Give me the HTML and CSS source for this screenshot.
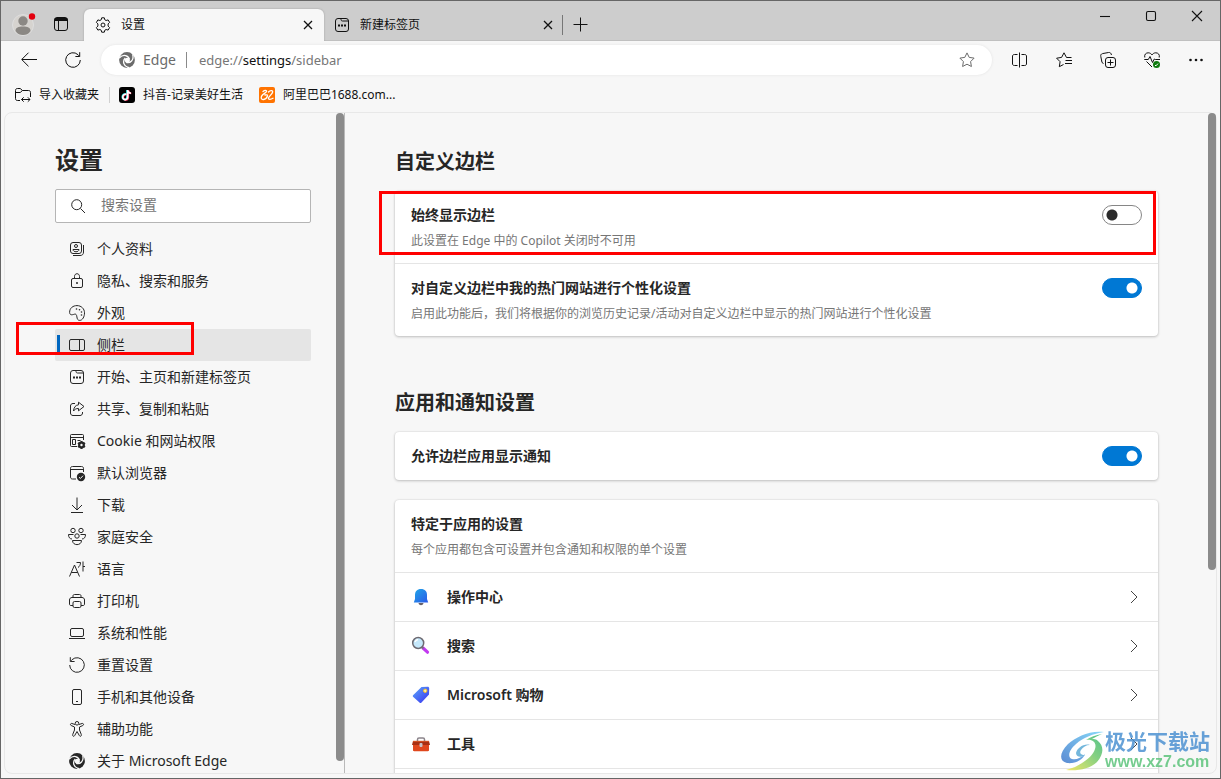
FILE: index.html
```html
<!DOCTYPE html>
<html lang="zh-CN">
<head>
<meta charset="utf-8">
<title>设置</title>
<link rel="stylesheet" href="styles.css">
</head>
<body>
<svg class="defs" aria-hidden="true">
  <defs>
    <mask id="swirl" maskUnits="userSpaceOnUse" x="0" y="0" width="16" height="16">
      <circle cx="8" cy="8" r="7.900" fill="#fff"/>
      <circle cx="8.300" cy="8.200" r="2.500" fill="#000"/>
      <g fill="none" stroke="#000" stroke-width="1.300">
        <path d="M10.500 7.500C9.500 3.500 4.500 1.500.2 6"/>
        <path d="M10.500 7.500C9.500 3.500 4.500 1.500.2 6" transform="rotate(120 8 8)"/>
        <path d="M10.500 7.500C9.500 3.500 4.500 1.500.2 6" transform="rotate(240 8 8)"/>
      </g>
    </mask>
    <symbol id="edge" viewBox="0 0 16 16"><rect width="16" height="16" fill="currentColor" mask="url(#swirl)"/></symbol>
    <symbol id="newtab" viewBox="0 0 16 16">
      <rect x="1.500" y="1.500" width="13" height="13" rx="2.500"/><path d="M7 1.500v1c0 .8.500 1.500 1.500 1.500h6"/>
      <path stroke-width="1.800" d="M4 8.500h2M7 8.500h2M10 8.500h2"/>
    </symbol>
    <symbol id="x" viewBox="0 0 16 16"><path d="M4 4l8 8M12 4l-8 8"/></symbol>
    <symbol id="go" viewBox="0 0 16 16"><path d="M5 2l6 6-6 6"/></symbol>
  </defs>
</svg>

<div class="window">
  <header class="titlebar">
    <button class="profile" aria-label="个人资料">
      <svg viewBox="0 0 24 24"><circle cx="11" cy="13" r="10.500" fill="#d6d3cf" stroke="#dedede"/><circle cx="11" cy="9" r="4.700" fill="#8b8884"/><path d="M3.500 19c0-3.500 3-4.500 7.500-4.500s7.500 1 7.500 4.500c-2 3-4.500 4-7.500 4s-5.500-1-7.500-4z" fill="#8b8884"/><circle cx="20" cy="4.500" r="3.200" fill="#e3000f"/></svg>
    </button>
    <button class="workspace" aria-label="标签页操作">
      <svg class="icon" viewBox="0 0 16 16"><rect x="1.500" y="1.500" width="13" height="13" rx="2.500"/><path fill="currentColor" d="M2 2.500h12v2H2z"/><path d="M5.500 5v9"/></svg>
    </button>
    <div class="tab tab-active">
      <svg class="icon" viewBox="0 0 16 16"><path d="M6.700.8h2.600l.5 2 1.300.7 2-.6 1.500 2.500-1.500 1.500v2.200l1.500 1.500-1.500 2.500-2-.6-1.300.7-.5 2H6.700l-.5-2-1.300-.7-2 .6-1.500-2.500 1.500-1.500V6.900L1.400 5.400l1.500-2.500 2 .6 1.300-.7z"/><circle cx="8" cy="8" r="2"/></svg>
      <span class="tab-title">设置</span>
      <button class="tab-close" aria-label="关闭"><svg class="icon"><use href="#x"/></svg></button>
    </div>
    <div class="tab">
      <svg class="icon"><use href="#newtab"/></svg>
      <span class="tab-title">新建标签页</span>
      <button class="tab-close" aria-label="关闭"><svg class="icon"><use href="#x"/></svg></button>
    </div>
    <button class="tab-add" aria-label="新建"><svg class="icon" viewBox="0 0 16 16"><path d="M7.500.5v14M.5 7.500h14"/></svg></button>
    <div class="controls">
      <button aria-label="最小化"><svg class="icon" viewBox="0 0 16 16"><path d="M3 8.500h10"/></svg></button>
      <button aria-label="最大化"><svg class="icon" viewBox="0 0 16 16"><rect x="3.500" y="3.500" width="9" height="9" rx="1.500"/></svg></button>
      <button aria-label="关闭窗口"><svg class="icon" viewBox="0 0 16 16"><path d="M3 3l10 10M13 3 3 13"/></svg></button>
    </div>
  </header>

  <div class="toolbar">
    <button class="tool" aria-label="返回"><svg class="icon" viewBox="0 0 16 16"><path d="M16 7.500H1M7.500.7.700 7.500l6.800 6.800"/></svg></button>
    <button class="tool tool-last" aria-label="刷新"><svg class="icon" viewBox="0 0 16 16"><path d="M15.300 8A7.300 7.300 0 1 1 13 2.700l1.500 1.500M14.700.2v4.300h-4.300"/></svg></button>
    <div class="address">
      <svg class="edge-mark"><use href="#edge"/></svg>
      <span class="brand">Edge</span>
      <span class="url">edge://<b>settings</b>/sidebar</span>
      <button class="star" aria-label="收藏"><svg class="icon" viewBox="0 0 16 16"><path d="m8 .9 2.200 4.500 4.900.7-3.500 3.500.8 4.900L8 12.200l-4.400 2.300.8-4.900L.9 6.100l4.900-.7z"/></svg></button>
    </div>
    <button class="tool" aria-label="拆分屏幕"><svg class="icon" viewBox="0 0 16 16"><path d="M7.500.5v15M5.500 2.500h-3c-1 0-2 .5-2 1.500v8c0 1 1 1.500 2 1.500h3M9.500 2.500h3c1 0 2 .5 2 1.500v8c0 1-1 1.500-2 1.500h-3"/></svg></button>
    <button class="tool" aria-label="收藏夹"><svg class="icon" viewBox="0 0 16 16"><path d="M15.500 5.500h-5L8 .8 5.600 5.400.6 6.200l3.500 3.500-.8 5 4.200-2.200M9.500 8.500h6.500M9 11.500h7"/></svg></button>
    <button class="tool" aria-label="集锦"><svg class="icon" viewBox="0 0 16 16"><rect x="5.500" y="5.500" width="10" height="10" rx="2.500"/><path d="M10.500 7.500v6M7.500 10.500h6M3.500 11.500 2 10.500.8 4.500C.5 3 1 2 2.500 1.600L8.500.5c1.500-.3 2.500.5 3 2.500"/></svg></button>
    <button class="tool" aria-label="浏览器概要"><svg class="icon" viewBox="0 0 16 16"><path d="M.3 7.500h4l1.700-3 2.500 6L10.300 7l1 .5H16M.8 5.500C0 2.500 2 .8 4.200.8 6 .8 7.300 1.800 8 3c.7-1.200 2-2.200 3.800-2.200 2.200 0 4.200 1.700 3.400 4.700M2.500 9.500 8 15"/><circle cx="12.500" cy="12.500" r="3.500" fill="#0f7b0f" stroke="none"/><path stroke="#fff" d="m11 13.200 1 .6 2-2.200"/></svg></button>
    <button class="tool" aria-label="更多"><svg class="icon dots" viewBox="0 0 16 16"><circle cx="2.500" cy="8" r="1.300"/><circle cx="8" cy="8" r="1.300"/><circle cx="13.500" cy="8" r="1.300"/></svg></button>
  </div>

  <nav class="bookmarks" aria-label="收藏夹栏">
    <a class="bookmark bookmark-import" href="#import"><svg class="icon" viewBox="0 0 16 16"><path d="M5 13.500H2.500c-1.300 0-2-.7-2-2v-8c0-1.300.7-2 2-2h2.700L7.500 3.500h6c1.300 0 2 .7 2 2V10M.5 5.500h4.700l2.300-2M6.500 12.500H15M8.700 10.300l-2.200 2.200 2.200 2.200M12.800 10.300l2.200 2.200-2.200 2.200"/></svg>导入收藏夹</a>
    <a class="bookmark" href="#douyin"><svg class="site" viewBox="0 0 16 16"><rect width="16" height="16" rx="3"/><g fill="none" stroke-width="1.700"><path stroke="#25f4ee" d="M7 7c-5-.5-4.500 6-1 5.500 1.500-.2 2-1 2-2.500V3c.2 1.800 1.200 3 3.200 3.200"/><path stroke="#fe2c55" d="M8 7.500c-5-.5-4.500 6-1 5.500 1.500-.2 2.300-1 2.300-2.500V3.200c.2 1.800 1.200 3 3 3.300"/><path stroke="#fff" d="M7.500 7.300c-5-.5-4.500 5.700-1 5.300 1.500-.2 2.200-1 2.200-2.500V3c.2 1.800 1.200 3 3.200 3.300"/></g></svg>抖音-记录美好生活</a>
    <a class="bookmark" href="#1688"><svg class="site" viewBox="0 0 16 16"><rect width="16" height="16" rx="2" fill="#ff7300"/><path fill="none" stroke="#fff" stroke-width="1.300" stroke-linecap="round" stroke-linejoin="round" d="M4 4.500c1.500-1.300 4-1.500 3.500 0C7 6 4.500 6.500 3 8.500c-1.700 2.300-.5 4.300 1.500 4 2-.3 3.500-2 4-3.500.2-1-.7-1.500-2.500-1M9.500 5c1.500-2 5-2 4 .5-.7 1.800-3.200 3.500-4 5.500-.5 2 2.500 1.500 4.500.3"/></svg>阿里巴巴1688.com...</a>
  </nav>

  <div class="page">
    <aside class="side">
      <div class="side-content">
        <h1>设置</h1>
        <label class="search">
          <svg class="icon" viewBox="0 0 16 16"><circle cx="6.700" cy="6.700" r="5"/><path d="m10.500 10.500 4.500 4.500"/></svg>
          <input type="search" placeholder="搜索设置" aria-label="搜索设置">
        </label>
        <nav class="menu" aria-label="设置">
          <a href="#p"><svg class="icon" viewBox="0 0 16 16"><rect x="1.500" y="1.500" width="11" height="11" rx="2.500"/><path d="M14.500 4v7c0 2.300-1.200 3.500-3.500 3.500H4"/><circle cx="7" cy="5" r="1.500"/><path d="M4 8.500h6c0 3-6 3-6 0z"/></svg>个人资料</a>
          <a href="#s"><svg class="icon" viewBox="0 0 16 16"><rect x="2.500" y="5.500" width="11" height="9" rx="1.500"/><path d="M5.500 5.500V3.500c0-3.700 5-3.700 5 0v2"/><circle cx="8" cy="10" r=".6" fill="currentColor"/></svg>隐私、搜索和服务</a>
          <a href="#a"><svg class="icon" viewBox="0 0 16 16"><path d="M.6 7.500C.6 3 4 .6 8 .6c4.300 0 7.500 3.200 7.500 7.200 0 4-2 7.600-4.800 7.600-2.200 0-2.500-1.700-2.800-3.500-.3-2.200-1-3.200-2.500-2.700C2.700 10 1 10.400.6 7.500z"/><g fill="currentColor" stroke="none"><circle cx="7.500" cy="4" r=".8"/><circle cx="10.500" cy="4.800" r=".8"/><circle cx="12.500" cy="7" r=".8"/><circle cx="12.500" cy="10" r=".8"/></g></svg>外观</a>
          <a href="#b" class="current" aria-current="page"><svg class="icon" viewBox="0 0 16 16"><rect x=".5" y="2.500" width="15" height="11" rx="1.500"/><path d="M10.500 2.500v11"/></svg>侧栏</a>
          <a href="#n"><svg class="icon"><use href="#newtab"/></svg>开始、主页和新建标签页</a>
          <a href="#c"><svg class="icon" viewBox="0 0 16 16"><path d="M6 2.500H4C2.500 2.500 1.500 3.500 1.500 5v7c0 1.500 1 2.500 2.500 2.500h7c1.500 0 2.500-1 2.500-2.500v-1"/><path d="M9.500 1.200 15 5.500l-5.500 4.300V7.500C7 7.400 5.500 8.500 4.500 10c.3-3.500 2-6 5-6.200z"/></svg>共享、复制和粘贴</a>
          <a href="#k"><svg class="icon" viewBox="0 0 16 16"><path d="M14.500 7V2.500c0-.7-.3-1-1-1h-11c-.7 0-1 .3-1 1v10c0 .7.300 1 1 1H8M1.500 4.500h13M3.500 6.500h3v5h-3zM8.500 7.500h3"/><circle cx="12.500" cy="12" r="2.300" stroke-width="2.200"/><path stroke-width="2" d="M12.500 8v2M12.500 14v2M9 10l1.500.9M14.500 13.100l1.500.9M9 14l1.500-.9M14.500 10.900 16 10"/></svg>Cookie 和网站权限</a>
          <a href="#d"><svg class="icon" viewBox="0 0 16 16"><path d="M14.500 7V3.500c0-1.300-.7-2-2-2h-9c-1.300 0-2 .7-2 2v8.500c0 1.300.7 2 2 2H7M1.500 4.500h13"/><circle cx="12" cy="12" r="4.200" fill="currentColor" stroke="none"/><path stroke="#f7f7f7" d="m10 12.200 1.400 1.300 2.600-2.800"/></svg>默认浏览器</a>
          <a href="#l"><svg class="icon" viewBox="0 0 16 16"><path d="M8 .5v12M3 8l5 5 5-5M2 15.500h12"/></svg>下载</a>
          <a href="#f"><svg class="icon" viewBox="0 0 16 16"><circle cx="4" cy="1.500" r="2.200"/><circle cx="12" cy="1.500" r="2.200"/><circle cx="8" cy="7" r="2.200"/><path d="M4.500 5.500H-.5c0 3 1.500 4.500 3.500 4.500M11.500 5.500h5c0 3-1.500 4.500-3.500 4.500M3.500 11.500h9c0 5.500-9 5.500-9 0z"/></svg>家庭安全</a>
          <a href="#y"><svg class="icon" viewBox="0 0 16 16"><path d="M.5 15.500 5.500 4l5 11.500M2.300 11.500h6.500M7.500 1.500h4c0 2.500-1 4-2.500 5M14 .5v10M14 5.500h2"/></svg>语言</a>
          <a href="#r"><svg class="icon" viewBox="0 0 16 16"><path d="M4 4.500V3c0-1 .5-1.500 1.500-1.500h5C11.500 1.500 12 2 12 3v1.500M4 12.500H2c-1 0-1.500-.5-1.500-1.500V7C.5 5.500 1.500 4.500 3 4.500h10c1.500 0 2.500 1 2.500 2.500v4c0 1-.5 1.500-1.500 1.500h-2"/><rect x="4" y="8.500" width="8" height="6" rx="1.500"/></svg>打印机</a>
          <a href="#t"><svg class="icon" viewBox="0 0 16 16"><rect x="1.500" y="3.500" width="13" height="8" rx="1.500"/><path d="M0 13.500h16"/></svg>系统和性能</a>
          <a href="#z"><svg class="icon" viewBox="0 0 16 16"><path d="M.7 8A7.300 7.300 0 1 0 3 2.700L1.500 4.200M1.300.2v4.300h4.300"/></svg>重置设置</a>
          <a href="#h"><svg class="icon" viewBox="0 0 16 16"><rect x="3.500" y=".5" width="9" height="15" rx="1.500"/><path d="M7 12.500h2"/></svg>手机和其他设备</a>
          <a href="#u"><svg class="icon" viewBox="0 0 16 16"><circle cx="8" cy="2.300" r="1.800"/><path d="M6 3.500 3 2.500C1.500 2 .8 4 2.200 4.500L5.500 6v3l-1.800 4.500c-.5 1.700 1.300 2.500 2 1L8 10.500l2.300 4c.7 1.500 2.500.7 2-1L10.500 9V6l3.300-1.500C15.200 4 14.500 2 13 2.500l-3 1"/></svg>辅助功能</a>
          <a href="#e"><svg class="edge-mark"><use href="#edge"/></svg>关于 Microsoft Edge</a>
        </nav>
      </div>
      <div class="thumb thumb-side"></div>
      <div class="mark mark-side"></div>
    </aside>

    <main class="main">
      <div class="content">
        <h2>自定义边栏</h2>
        <section class="card card-first">
          <div class="row row-tall">
            <div class="text"><label for="always">始终显示边栏</label><p>此设置在 Edge 中的 Copilot 关闭时不可用</p></div>
            <input class="switch" type="checkbox" id="always">
          </div>
          <div class="row row-tall">
            <div class="text"><label for="personal">对自定义边栏中我的热门网站进行个性化设置</label><p>启用此功能后，我们将根据你的浏览历史记录/活动对自定义边栏中显示的热门网站进行个性化设置</p></div>
            <input class="switch" type="checkbox" id="personal" checked>
          </div>
          <div class="mark mark-row"></div>
        </section>
        <h2>应用和通知设置</h2>
        <section class="card">
          <div class="row"><label for="notify">允许边栏应用显示通知</label><input class="switch" type="checkbox" id="notify" checked></div>
        </section>
        <section class="card">
          <div class="row row-tall"><div class="text"><h3>特定于应用的设置</h3><p>每个应用都包含可设置并包含通知和权限的单个设置</p></div></div>
          <a class="row" href="#1"><svg class="app" viewBox="0 0 20 20"><defs><linearGradient id="g1" x1="0" y1="0" x2="1" y2="1"><stop stop-color="#1fa7e8"/><stop offset="1" stop-color="#2b58e8"/></linearGradient></defs><path d="M7.500 16h5c-.5 3-4.500 3-5 0z" fill="#66616b"/><path d="M10 2c4 0 6 2.500 6 6v4l1.200 3.500H2.800L4 12V8c0-3.500 2-6 6-6z" fill="url(#g1)"/></svg><span>操作中心</span><svg class="icon chevron"><use href="#go"/></svg></a>
          <a class="row" href="#2"><svg class="app" viewBox="0 0 20 20"><path d="m12 12 4.500 4.200" stroke="#c239f0" stroke-width="3.200" stroke-linecap="round"/><path d="m10.500 10.500 2 2" stroke="#77717c" stroke-width="2"/><circle cx="7.200" cy="7" r="5.500" fill="#c5e8fb" stroke="#6d6a72" stroke-width="1.500"/><path d="M4 6c.5-1.500 1.500-2.300 3-2.500" fill="none" stroke="#fff" stroke-width="1.300"/></svg><span>搜索</span><svg class="icon chevron"><use href="#go"/></svg></a>
          <a class="row" href="#3"><svg class="app" viewBox="0 0 20 20"><defs><linearGradient id="g2" x1="0" y1="0" x2="1" y2="1"><stop stop-color="#5ba9fa"/><stop offset="1" stop-color="#3930ef"/></linearGradient></defs><path d="m10.500 2 6-.2c1.200 0 1.700.6 1.700 1.700L18 9.500l-7.500 8c-.7.7-1.400.7-2 0L2.300 12c-.7-.7-.7-1.400 0-2z" fill="url(#g2)"/><circle cx="14.200" cy="5.800" r="1.700" fill="#fff3ad" stroke="#f6bd27"/></svg><span>Microsoft 购物</span><svg class="icon chevron"><use href="#go"/></svg></a>
          <a class="row" href="#4"><svg class="app" viewBox="0 0 20 20"><path d="M6.500 7V5.500c0-1 .5-1.500 1.500-1.500h4c1 0 1.500.5 1.500 1.500V7" fill="none" stroke="#8c858c" stroke-width="1.500"/><path d="M2 10h16v6c0 .8-.5 1.200-1.200 1.200H3.200c-.7 0-1.200-.4-1.200-1.200z" fill="#e0471d"/><path d="M2 7h16l1 4H1z" fill="#a93013"/><path d="M2 6.800h16v1H2z" fill="#dc5828"/><rect x="8.500" y="9" width="3" height="4" rx="1" fill="#c9c3c7"/></svg><span>工具</span><svg class="icon chevron"><use href="#go"/></svg></a>
          <a class="row" href="#5" aria-label="更多应用"></a>
        </section>
      </div>
      <div class="thumb thumb-main"></div>
    </main>
  </div>

  <div class="watermark">
    <svg viewBox="0 0 44 40"><defs><linearGradient id="w1" x1="0" y1="1" x2="1" y2="0"><stop stop-color="#3f78cc"/><stop offset="1" stop-color="#74d3f8"/></linearGradient><linearGradient id="w2" x1="0" y1="1" x2="1" y2="0"><stop stop-color="#f3e64e"/><stop offset=".6" stop-color="#6fc86d"/><stop offset="1" stop-color="#37b878"/></linearGradient></defs>
      <path fill="url(#w1)" d="M43 1C29-1 15 6 7 13c-9 9-9 17-1 19 8 1 16-3 18-9-4 4-9 6-13 5-5-2-3-9 4-15C23 6 32 3 43 1z"/>
      <path fill="#5cabd6" d="M29 14c-6-2-13 3-14 8 0 4 5 5 9 2-4 0-6-2-4-5 2-3 5-5 9-5z"/>
      <path fill="url(#w2)" d="M41 3c-6 1-12 3-16 6 7-1 11 3 9 9-2 7-10 13-20 18l-9 3c12 1 24-1 31-8 7-8 7-16 1-21-2-2-4-2-6-2 3-2 6-3 10-5z"/>
    </svg>
    <div class="watermark-text"><span>极光下载站</span><span class="watermark-url">www.xz7.com</span></div>
  </div>
</div>
</body>
</html>
```
FILE: styles.css
```css
* { box-sizing: border-box; }
body {
  margin: 0;
  font: 14px/20px "Noto Sans", "Noto Sans CJK SC", sans-serif;
  color: #262626;
}
h1, h2, h3, p { margin: 0; }
button { border: 0; padding: 0; background: none; color: inherit; display: flex; align-items: center; justify-content: center; }
a { color: inherit; text-decoration: none; }
.defs { position: absolute; width: 0; height: 0; }
.icon { width: 16px; height: 16px; flex: none; fill: none; stroke: currentColor; overflow: visible; }
.edge-mark { width: 16px; height: 16px; flex: none; }
.window {
  position: relative;
  height: 100vh;
  display: flex;
  flex-direction: column;
  border: 1px solid #666;
  background: #f7f7f7;
  overflow: hidden;
}

.titlebar { display: flex; align-items: flex-end; height: 40px; flex: none; background: #cdcdcd; border-bottom: 1px solid #c0c0c0; color: #111; }
.profile { width: 24px; height: 32px; margin-left: 11px; }
.profile svg { width: 24px; height: 24px; }
.workspace { width: 32px; height: 32px; margin: 0 7px 0 9px; }
.tab { display: flex; align-items: center; height: 31px; width: 239px; padding: 0 7px 0 10px; gap: 10px; font-size: 12px; }
.tab-active { width: 240px; height: 32px; margin-bottom: -1px; padding: 0 8px 0 11px; background: #f7f7f7; border-radius: 6px 6px 0 0; box-shadow: 0 0 2px #999; clip-path: inset(-3px -3px 0 -3px); }
.tab-title { flex: 1; }
.tab-close { width: 16px; height: 16px; }
.tab-close .icon { stroke-width: 1.3; }
.tab:not(.tab-active) { background: linear-gradient(#777, #777) right 6px / 1px 20px no-repeat; }
.tab-add { width: 36px; height: 31px; }
.controls { display: flex; align-self: flex-start; margin-left: auto; }
.controls button { width: 46px; height: 30px; }
.controls .icon { stroke-width: 1.1; }

.toolbar { display: flex; align-items: center; height: 38px; flex: none; padding: 0 2px 0 6px; color: #111; }
.tool { width: 44px; height: 32px; }
.tool-last { margin-right: 6px; }
.dots { fill: currentColor; stroke: none; }
.address { flex: 1; display: flex; align-items: center; height: 30px; margin-right: 6px; padding: 0 17px 0 18px; border-radius: 15px; background: #fff; color: #6b6b6b; box-shadow: 0 0 3px #e2e2e2; }
.brand { margin-left: 8px; padding-right: 10px; border-right: 1px solid #8a8a8a; line-height: 16px; }
.url { flex: 1; margin-left: 12px; font-size: 13px; color: #767676; }
.url b { font-weight: 400; color: #111; }

.bookmarks { display: flex; align-items: center; height: 32px; margin-bottom: 1px; flex: none; padding-left: 14px; gap: 16px; font-size: 12px; color: #111; }
.bookmark { display: flex; align-items: center; gap: 8px; }
.bookmark-import { padding-right: 10px; margin-right: -7px; border-right: 1px solid #d0d0d0; line-height: 16px; }
.site { width: 16px; height: 16px; }

.page { flex: 1; min-height: 0; display: flex; margin: 0 3px 4px; border: 1px solid #e8e8e8; border-radius: 8px; }
.side { position: relative; display: flex; flex: none; width: 340px; border-right: 1px solid #b9b9b9; }
.side-content { flex: 1; min-width: 0; overflow: hidden; padding: 31px 25px 0 50px; }
.thumb { width: 8px; flex: none; border-radius: 4px; background: #8b8b8b; }
.thumb-side { margin-bottom: 12px; }
h1 { font-size: 24px; line-height: 32px; font-weight: 700; }
.search { display: flex; align-items: center; height: 34px; margin: 13px 0 10px; padding: 0 14px; gap: 15px; border: 1px solid #b5b5b5; border-radius: 2px; background: #fff; }
.search input { flex: 1; min-width: 0; height: 20px; padding: 0 0 2px; border: 0; outline: 0; background: none; font: inherit; color: inherit; appearance: none; }
.search input::placeholder { color: #767676; }
.menu a { display: flex; align-items: center; height: 32px; padding-left: 14px; gap: 12px; border-radius: 2px; }
.menu .current { background: linear-gradient(#0067c0, #0067c0) 2px center / 3px 20px no-repeat #e5e5e5; }
.mark { position: absolute; border: 3px solid #f00; pointer-events: none; }
.mark-side { left: 11px; top: 209px; width: 178px; height: 33px; }
.mark-row { left: -16px; right: 2px; top: 0; height: 64px; }

.main { flex: 1; min-width: 0; display: flex; overflow: hidden; }
.content { flex: 1; min-width: 0; padding: 35px 50px 0 50px; }
.thumb-main { height: 457px; }
h2 { font-size: 20px; line-height: 28px; margin-bottom: 15px; font-weight: 700; }
.card { position: relative; background: #fff; border-radius: 4px; box-shadow: 0 1px 3px #0003, 0 0 2px #0002; margin-bottom: 20px; }
.card-first { margin-bottom: 53px; }
.row { display: flex; align-items: center; min-height: 48px; padding: 0 16px; font-weight: 600; }
.row + .row { border-top: 1px solid #e5e5e5; min-height: 49px; }
.row-tall { align-items: flex-start; padding: 14px 16px 12px; }
.text { flex: 1; display: grid; gap: 6px; }
.row label { flex: 1; }
h3 { font-size: 14px; font-weight: 600; }
.text p { font-size: 12px; font-weight: 400; color: #767676; }
.app { width: 20px; height: 20px; margin-right: 16px; }
.chevron { margin-left: auto; stroke: #444; }
.switch { appearance: none; width: 40px; height: 20px; margin: 0; flex: none; border: 1px solid #868686; border-radius: 10px; background: radial-gradient(circle at 9px 9px, #2b2b2b 5px, transparent 6px) #fff; }
.switch:checked { border-color: #0078d4; background: radial-gradient(circle at 29px 9px, #fff 5px, transparent 6px) #0078d4; }

.watermark { position: absolute; right: 10px; bottom: 7px; display: flex; align-items: center; opacity: .85; pointer-events: none; }
.watermark svg { width: 44px; height: 40px; }
.watermark-text { display: flex; flex-direction: column; font-size: 21px; line-height: 23px; font-weight: 600; color: #4d92d2; }
.watermark-url { font: 700 16px/18px "Liberation Sans", sans-serif; color: #5ec47c; }
```
